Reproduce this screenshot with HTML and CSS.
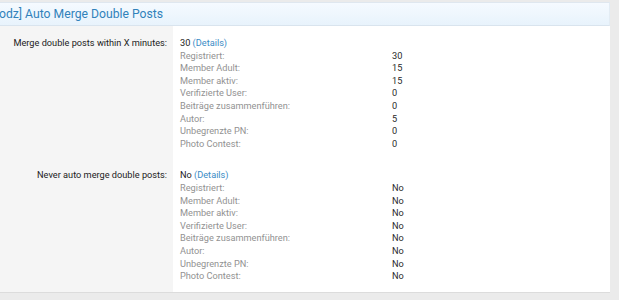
FILE: index.html
```html
<!DOCTYPE html>
<html>
<head>
<meta charset="utf-8">
<link rel="stylesheet" href="styles.css">
</head>
<body>
<div class="panel">
  <div class="head"><span class="title">odz] Auto Merge Double Posts</span></div>
  <div class="body">
    <div class="row first">
      <div class="label">Merge double posts within X minutes:</div>
      <div class="value">
        <div class="main">30 <a class="det">(Details)</a></div>
        <div class="list">
          <span class="k">Registriert:</span><span class="v">30</span>
          <span class="k">Member Adult:</span><span class="v">15</span>
          <span class="k">Member aktiv:</span><span class="v">15</span>
          <span class="k">Verifizierte User:</span><span class="v">0</span>
          <span class="k">Beiträge zusammenführen:</span><span class="v">0</span>
          <span class="k">Autor:</span><span class="v">5</span>
          <span class="k">Unbegrenzte PN:</span><span class="v">0</span>
          <span class="k">Photo Contest:</span><span class="v">0</span>
        </div>
      </div>
    </div>
    <div class="row second">
      <div class="label">Never auto merge double posts:</div>
      <div class="value">
        <div class="main">No <a class="det">(Details)</a></div>
        <div class="list">
          <span class="k">Registriert:</span><span class="v">No</span>
          <span class="k">Member Adult:</span><span class="v">No</span>
          <span class="k">Member aktiv:</span><span class="v">No</span>
          <span class="k">Verifizierte User:</span><span class="v">No</span>
          <span class="k">Beiträge zusammenführen:</span><span class="v">No</span>
          <span class="k">Autor:</span><span class="v">No</span>
          <span class="k">Unbegrenzte PN:</span><span class="v">No</span>
          <span class="k">Photo Contest:</span><span class="v">No</span>
        </div>
      </div>
    </div>
  </div>
</div>
</body>
</html>
```
FILE: styles.css
```css
html, body {
  margin: 0;
  padding: 0;
  background: #ebebeb;
  font-family: Roboto, "Open Sans", sans-serif;
}
.panel {
  width: 610px;
  margin-top: 2px;
  background: #fff;
  border-bottom: 1px solid #dcdcdc;
}
.head {
  height: 24px;
  box-sizing: border-box;
  background: linear-gradient(#f5faff, #e8f3fc);
  border-top: 1px solid #dfe7ef;
  border-bottom: 1px solid #d9e4ee;
  border-right: 1px solid #e3ecf4;
  display: flex;
  align-items: center;
}
.title {
  font-size: 12.2px;
  color: #3182bb;
  margin-left: -1px;
  white-space: nowrap;
}
.row {
  display: flex;
}
.label {
  width: 173px;
  flex: none;
  box-sizing: border-box;
  background: #f5f5f5;
  text-align: right;
  padding-right: 6px;
  font-size: 9.2px;
  line-height: 12.6px;
  color: #222;
  white-space: nowrap;
}
.first .label { padding-top: 11px; }
.second .label { padding-top: 8px; }
.value {
  flex: 1;
  padding-left: 7px;
  font-size: 9.2px;
  color: #222;
}
.first .value { padding-top: 11px; padding-bottom: 11px; }
.second .value { padding-top: 8px; padding-bottom: 9px; }
.main, .list { line-height: 12.6px; }
.det { color: #3a8cc6; }
.list {
  display: grid;
  grid-template-columns: 212px auto;
}
.k { color: #929292; }
.v { color: #2a2a2a; }
```
